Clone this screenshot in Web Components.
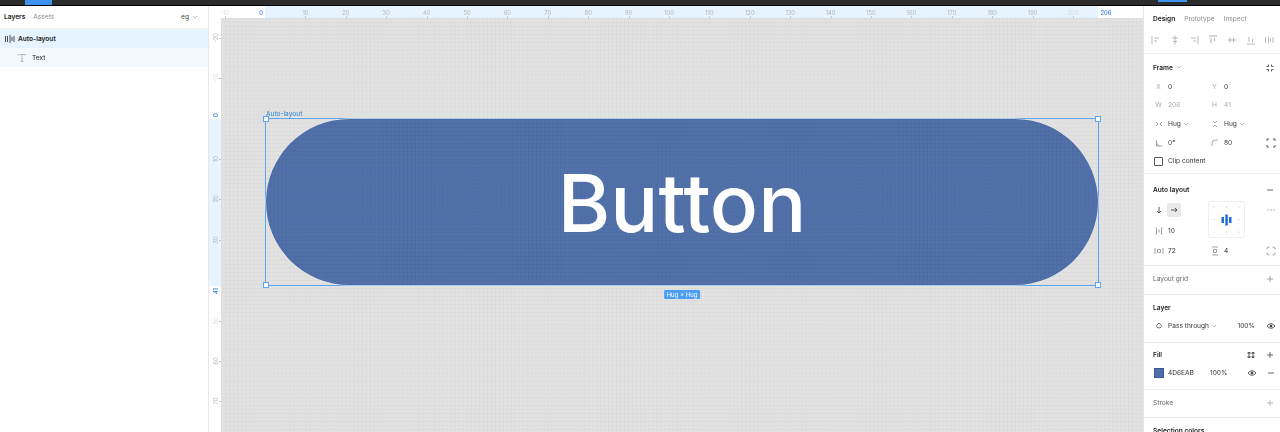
<!DOCTYPE html>
<html lang="en">
<head>
<meta charset="utf-8">
<title>Auto-layout</title>
<style>
  html, body { margin: 0; height: 100%; overflow: hidden; background: #fff; }
  body { font-family: Inter, "Liberation Sans", sans-serif; }
</style>
</head>
<body>
<fig-app></fig-app>

<script>
"use strict";

const SCALE = 4.04;
const stroke = (d, color = "#8c8c8c") =>
  `<svg width="12" height="12" viewBox="0 0 12 12" fill="none" stroke="${color}" stroke-width=".8"><path d="${d}"/></svg>`;

class FigTopbar extends HTMLElement {
  connectedCallback() {
    this.attachShadow({ mode: "open" }).innerHTML = `
      <style>
        :host { display: flex; height: 5px; background: #2c2c2c; border-bottom: 1px solid #000; padding-left: 25px; }
        div { width: 27px; background: #3d94ef; }
        .right { margin-left: 1106px; width: 29px; height: 2px; }
      </style>
      <div></div><div class="right"></div>`;
  }
}

class FigLayerRow extends HTMLElement {
  connectedCallback() {
    const selected = this.hasAttribute("selected");
    this.attachShadow({ mode: "open" }).innerHTML = `
      <style>
        :host { display: flex; align-items: center; height: 19px; padding-left: var(--indent, 4px); gap: var(--gap, 2px);
                background: ${selected ? "#e5f4ff" : "#f2f9ff"}; font-size: 6.6px; color: #222;
                font-weight: ${selected ? 600 : 400}; }
        span { display: flex; }
      </style>
      <span><slot name="icon"></slot></span><slot></slot>`;
  }
}

class FigLayers extends HTMLElement {
  connectedCallback() {
    this.attachShadow({ mode: "open" }).innerHTML = `
      <style>
        :host { display: block; background: #fff; border-right: 1px solid #e8e8e8; }
        header { display: flex; align-items: center; height: 22px; padding: 0 10px 0 4px; gap: 8px; font-size: 6.6px;
                 border-bottom: 1px solid #f0f0f0; color: #8a8a8a; }
        b { color: #222; font-weight: 600; }
        .page { margin-left: auto; color: #444; display: flex; align-items: center; gap: 3px; }
      </style>
      <header><b>Layers</b><span>Assets</span>
        <span class="page">eg <svg width="6" height="6" viewBox="0 0 6 6" fill="none" stroke="#aaa" stroke-width=".8"><path d="M1 2l2 2 2-2"/></svg></span>
      </header>
      <slot></slot>`;
  }
}

class FigRuler extends HTMLElement {
  connectedCallback() {
    const vertical = this.hasAttribute("vertical");
    const origin = vertical ? 100.5 : 56;
    const size = vertical ? 167 : 833;
    const values = vertical ? [-20, -10, 10, 20, 30, 50, 60, 70] : [];
    if (!vertical) for (let v = -10; v <= 200; v += 10) if (v !== 0) values.push(v);
    const axis = vertical ? "top" : "left";
    const ticks = values.map((v) => {
      const faded = v === 200 || v === -10 || (vertical && v === 50) ? " faded" : "";
      return `<i class="tick${faded}" style="${axis}:${origin + v * SCALE}px"><em>${v}</em></i>`;
    }).join("");
    const ends = vertical
      ? `<i class="tick end" style="top:${origin - 4}px"><em>0</em></i><i class="tick end" style="top:${origin + size + 5}px"><em>41</em></i>`
      : `<i class="tick end" style="left:${origin - 4}px"><em>0</em></i><i class="tick end" style="left:${origin + size + 8}px"><em>206</em></i>`;
    this.attachShadow({ mode: "open" }).innerHTML = `
      <style>
        :host { display: block; position: relative; overflow: hidden; background: #fff; font-size: 5.8px; color: #b4b4b4; }
        .range { position: absolute; background: #e5f4ff; ${vertical ? `left:0;right:0;top:${origin}px;height:${size}px` : `top:0;bottom:0;left:${origin}px;width:${size}px`}; }
        .tick { position: absolute; font-style: normal; ${vertical ? "left:0;width:12px;height:0" : "top:0;height:12px;width:0"}; }
        .tick em { position: absolute; font-style: normal; white-space: nowrap;
                   ${vertical ? "left:5.5px;top:0;transform:translate(-50%,-50%) rotate(-90deg)" : "left:0;top:6px;transform:translate(-50%,-50%)"}; }
        .faded { color: #dcdcdc; }
        .end { color: #2b7fd6; font-weight: 500; }
        .tick:not(.end)::after { content: ""; position: absolute; background: #c4c4c4;
                   ${vertical ? "right:0;top:0;width:2px;height:1px" : "bottom:0;left:0;width:1px;height:2px"}; }
      </style>
      <div class="range"></div>${ticks}${ends}`;
  }
}

class FigButton extends HTMLElement {
  connectedCallback() {
    this.attachShadow({ mode: "open" }).innerHTML = `
      <style>
        :host { display: flex; align-items: center; justify-content: center; box-sizing: border-box; height: 100%;
                border-radius: 84px; color: #fff; font-size: 80px; font-weight: 500;
                background-color: #5371a9;
                background-image: linear-gradient(#4d6ca6 1px, transparent 1px), linear-gradient(90deg, #4d6ca6 1px, transparent 1px);
                background-size: ${SCALE}px ${SCALE}px; box-shadow: 0 0 0 .5px #f1f1f1; }
      </style>
      <slot></slot>`;
  }
}

class FigSelection extends HTMLElement {
  connectedCallback() {
    this.attachShadow({ mode: "open" }).innerHTML = `
      <style>
        :host { position: absolute; left: 44px; top: 100px; width: 832px; height: 166px; display: block;
                border: 1px solid #5ba6ef; }
        .label { position: absolute; left: 0; top: -9px; font-size: 6.6px; line-height: 8px; color: #2b7fd6; }
        .handle { position: absolute; width: 4px; height: 4px; background: #fff; border: 1px solid #5ba6ef; }
        .tl { left: -3px; top: -3px; } .tr { right: -3px; top: -3px; }
        .bl { left: -3px; bottom: -3px; } .br { right: -3px; bottom: -3px; }
        .size { position: absolute; left: 50%; bottom: -14px; transform: translateX(-50%); background: #4a9ff5;
                color: #fff; font-size: 6px; line-height: 9px; padding: 0 2.500px; border-radius: 1px; white-space: nowrap; }
      </style>
      <div class="label">Auto-layout</div>
      <slot></slot>
      <span class="handle tl"></span><span class="handle tr"></span><span class="handle bl"></span><span class="handle br"></span>
      <div class="size">Hug × Hug</div>`;
  }
}

class FigCanvas extends HTMLElement {
  connectedCallback() {
    this.attachShadow({ mode: "open" }).innerHTML = `
      <style>
        :host { display: block; position: relative; overflow: hidden; background-color: #e2e2e2;
                background-image: linear-gradient(#dcdcdc 1px, transparent 1px), linear-gradient(90deg, #dcdcdc 1px, transparent 1px);
                background-size: ${SCALE}px ${SCALE}px; }
      </style>
      <slot></slot>`;
  }
}

class FigSection extends HTMLElement {
  connectedCallback() {
    const title = this.getAttribute("heading") || "";
    const muted = this.hasAttribute("muted");
    this.attachShadow({ mode: "open" }).innerHTML = `
      <style>
        :host { display: block; padding: var(--pt, 4px) 0 var(--pb, 4px); border-bottom: 1px solid #ececec; }
        header { display: flex; align-items: center; height: 18.7px; padding: 0 4px 0 9px; font-size: 6.6px;
                 font-weight: ${muted ? 400 : 600}; color: ${muted ? "#666" : "#222"}; }
        .extra { margin-left: auto; display: flex; gap: 7px; align-items: center; }
        .chev { margin-left: 3px; display: flex; }
      </style>
      <header>${title}<span class="chev"><slot name="chevron"></slot></span><span class="extra"><slot name="actions"></slot></span></header>
      <slot></slot>`;
  }
}

class FigProp extends HTMLElement {
  connectedCallback() {
    this.attachShadow({ mode: "open" }).innerHTML = `
      <style>
        :host { display: flex; align-items: center; font-size: 6.6px; color: #333; white-space: nowrap; min-width: 0; }
        .icon { width: 16px; flex: none; display: flex; justify-content: center; padding-right: 3px; box-sizing: border-box; }
      </style>
      <span class="icon"><slot name="icon"></slot></span><slot></slot>`;
  }
}

class FigRow extends HTMLElement {
  connectedCallback() {
    this.attachShadow({ mode: "open" }).innerHTML = `
      <style>
        :host { display: grid; grid-template-columns: 56px 54px 18px; align-items: center; height: 18.7px; padding-left: 8px; }
      </style>
      <slot></slot>`;
  }
}

class FigAlignBox extends HTMLElement {
  connectedCallback() {
    const dots = [[6, 6], [18.5, 6], [31, 6], [6, 18.5], [31, 18.5], [6, 31], [18.5, 31], [31, 31]]
      .map(([x, y]) => `<circle cx="${x}" cy="${y}" r=".5" fill="#b5b5b5"/>`).join("");
    this.attachShadow({ mode: "open" }).innerHTML = `
      <style>:host { display: block; width: 37px; height: 37px; border: 1px solid #efefef; border-radius: 2px; box-sizing: border-box; line-height: 0; }</style>
      <svg width="35" height="35" viewBox="1 1 35 35">${dots}
        <g fill="#1f6fd0"><rect x="13.5" y="16" width="2.5" height="6"/><rect x="17.3" y="13.5" width="2.5" height="11"/><rect x="21" y="16" width="2.5" height="6"/></g></svg>`;
  }
}

class FigInspector extends HTMLElement {
  connectedCallback() {
    this.attachShadow({ mode: "open" }).innerHTML = `
      <style>
        :host { display: block; overflow: hidden; background: #fff; border-left: 1px solid #e4e4e4; }
        .tabs { display: flex; align-items: center; height: 25px; padding-left: 9px; gap: 9px; font-size: 6.6px; color: #8a8a8a; }
        .tabs b { color: #222; font-weight: 600; }
        .aligns { display: flex; align-items: center; height: 17px; padding: 0 0 5px 6px; gap: 7px; border-bottom: 1px solid #ececec; }
        .aligns svg { display: block; }
      </style>
      <div class="tabs"><b>Design</b><span>Prototype</span><span>Inspect</span></div>
      <div class="aligns">
        ${stroke("M2 2v8M4 4h5M4 7h3", "#aaa")}
        ${stroke("M6 1.500v9M3 4h6M4 7.500h4", "#aaa")}
        ${stroke("M10 2v8M3 4h5M5 7h3", "#aaa")}
        ${stroke("M2 2h8M4 4v5M7.500 4v3", "#999")}
        ${stroke("M1.500 6h9M4 3v6M7.500 4v4", "#aaa")}
        ${stroke("M2 10h8M4 3v5M7.500 5v3", "#aaa")}
        ${stroke("M1.500 3v6M4.500 3v6M6.500 4.500v3M9 3v6", "#aaa")}
      </div>
      <slot></slot>`;
  }
}

class FigApp extends HTMLElement {
  connectedCallback() {
    this.attachShadow({ mode: "open" }).innerHTML = `
      <style>
        :host { display: grid; grid-template-columns: 209px 12px minmax(0, 1fr) 137px; grid-template-rows: 6px 12px minmax(0, 1fr); height: 432px; overflow: hidden; color: #222; filter: blur(.3px); }
        fig-topbar { grid-column: 1 / -1; }
        fig-layers { grid-column: 1; grid-row: 2 / 4; }
        .hr { grid-column: 2 / 4; grid-row: 2; }
        .vr { grid-column: 2; grid-row: 3; }
        fig-canvas { grid-column: 3; grid-row: 3; }
        fig-inspector { grid-column: 4; grid-row: 2 / 4; }
        .rows { display: grid; grid-template-columns: 56px 54px 18px; grid-template-rows: 22px 19px 22px; align-items: center; padding-left: 8px; }
        .dir { display: flex; align-items: center; gap: 1px; }
        .dir span { width: 14px; height: 14px; display: flex; align-items: center; justify-content: center; border-radius: 2px; }
        .dir .on { background: #e9e9e9; }
        .mid { grid-column: 2; grid-row: 1 / 3; }
        .end { display: flex; justify-content: center; }
        .muted { color: #aaa; }
        .swatch { width: 10px; height: 10px; background: #4d6eab; border: .5px solid #3b5990; box-sizing: border-box; display: block; }
        .check { width: 7px; height: 7px; border: 1px solid #555; border-radius: 1px; display: block; }
        .auto { margin-left: auto; }
        svg { display: block; }
      </style>
      <fig-topbar></fig-topbar>
      <fig-layers>
        <fig-layer-row selected><span slot="icon">${stroke("M1.500 3v6M3.500 3v6M6 2v8M8 4v4M10 3v6", "#222")}</span>Auto-layout</fig-layer-row>
        <fig-layer-row style="--indent:16px;--gap:4px"><span slot="icon">${stroke("M2.500 3.500V2.500h7v1M6 2.500v7M4.500 9.500h3", "#aaa")}</span>Text</fig-layer-row>
      </fig-layers>
      <fig-ruler class="hr"></fig-ruler>
      <fig-ruler class="vr" vertical></fig-ruler>
      <fig-canvas>
        <fig-selection><fig-button>Button</fig-button></fig-selection>
      </fig-canvas>
      <fig-inspector>
        <fig-section heading="Frame" style="--pt:4.600px;--pb:2.400px">
          <span slot="chevron">${chev()}</span>
          <span slot="actions">${stroke("M2.500 4.500h2v-2M7.500 2.500v2h2M2.500 7.500h2v2M7.500 9.500v-2h2", "#333")}</span>
          <fig-row><fig-prop><span slot="icon" class="muted">X</span>0</fig-prop><fig-prop><span slot="icon" class="muted">Y</span>0</fig-prop></fig-row>
          <fig-row><fig-prop style="color:#aaa"><span slot="icon" class="muted">W</span>206</fig-prop><fig-prop style="color:#aaa"><span slot="icon" class="muted">H</span>41</fig-prop></fig-row>
          <fig-row><fig-prop><span slot="icon">${stroke("M3 4l2 2-2 2M9 4L7 6l2 2")}</span>Hug&nbsp;${chev()}</fig-prop><fig-prop><span slot="icon">${stroke("M4 3l2 2 2-2M4 9l2-2 2 2")}</span>Hug&nbsp;${chev()}</fig-prop></fig-row>
          <fig-row><fig-prop><span slot="icon">${stroke("M3.500 3v6h6M3.500 6l2.500 3")}</span>0°</fig-prop><fig-prop><span slot="icon">${stroke("M3 9V6.500A3.500 3.500 0 0 1 6.500 3H9")}</span>80</fig-prop><span class="end">${stroke("M2 4V2h2M8 2h2v2M10 8v2H8M4 10H2V8", "#333")}</span></fig-row>
          <fig-row><fig-prop><span slot="icon" class="check"></span>Clip content</fig-prop></fig-row>
        </fig-section>
        <fig-section heading="Auto layout" style="--pt:6.500px;--pb:2.300px">
          <span slot="actions">${stroke("M3 6h6", "#444")}</span>
          <div class="rows">
            <div class="dir"><span>${stroke("M6 3v6M4 7l2 2 2-2", "#333")}</span><span class="on">${stroke("M3 6h6M7 4l2 2-2 2", "#333")}</span></div>
            <div class="mid"><fig-align-box></fig-align-box></div>
            <span class="end">${stroke("M2.500 6h.8M5.600 6h.8M8.700 6h.8", "#222")}</span>
            <fig-prop><span slot="icon">${stroke("M2.500 3h1v6h-1M9.500 3h-1v6h1M6 4.500v3")}</span>10</fig-prop>
            <span></span>
            <fig-prop><span slot="icon">${stroke("M2 3v6M10 3v6M4.500 4.500h3v3h-3z")}</span>72</fig-prop>
            <fig-prop><span slot="icon">${stroke("M3 2h6M3 10h6M4.500 4.500h3v3h-3z")}</span>4</fig-prop>
            <span class="end">${stroke("M2 4.500V3l1-1h1.500M7.500 2H9l1 1v1.500M10 7.500V9l-1 1H7.500M4.500 10H3L2 9V7.500")}</span>
          </div>
        </fig-section>
        <fig-section heading="Layout grid" muted style="--pt:3.650px;--pb:5.650px">
          <span slot="actions">${stroke("M6 3v6M3 6h6")}</span>
        </fig-section>
        <fig-section heading="Layer" style="--pt:3.650px;--pb:6px">
          <fig-row><fig-prop style="grid-column:1 / 3;padding-right:7px"><span slot="icon">${stroke("M6 3l2.500 2.500a2.500 2.500 0 0 1-5 0z", "#555")}</span>Pass through&nbsp;${chev()}<span class="auto">100%</span></fig-prop><span class="end">${eye()}</span></fig-row>
        </fig-section>
        <fig-section heading="Fill" style="--pt:2.650px;--pb:6px">
          <span slot="actions">${stroke("M3 3.500h2v1.500H3zM7 3.500h2v1.500H7zM3 7h2v1.500H3zM7 7h2v1.500H7z", "#333")}</span>
          <span slot="actions">${stroke("M6 3v6M3 6h6", "#444")}</span>
          <fig-row><fig-prop><span slot="icon" class="swatch"></span>4D6EAB</fig-prop><fig-prop style="margin-left:-14px;padding-right:5px">100%<span class="auto">${eye()}</span></fig-prop><span class="end">${stroke("M3 6h6", "#444")}</span></fig-row>
        </fig-section>
        <fig-section heading="Stroke" muted style="--pt:3.650px;--pb:4.650px">
          <span slot="actions">${stroke("M6 3v6M3 6h6", "#aaa")}</span>
        </fig-section>
        <fig-section heading="Selection colors" style="--pt:3.650px"></fig-section>
      </fig-inspector>`;
  }
}

function chev() {
  return `<svg width="6" height="6" viewBox="0 0 6 6" fill="none" stroke="#aaa" stroke-width=".8" style="display:inline-block"><path d="M1 2l2 2 2-2"/></svg>`;
}
function eye() {
  return `<svg width="10" height="10" viewBox="0 0 10 10" fill="none" stroke="#333" stroke-width=".8"><path d="M1 5c2.500-3 5.500-3 8 0-2.500 3-5.500 3-8 0z"/><circle cx="5" cy="5" r="1" fill="#333"/></svg>`;
}

customElements.define("fig-topbar", FigTopbar);
customElements.define("fig-layer-row", FigLayerRow);
customElements.define("fig-layers", FigLayers);
customElements.define("fig-ruler", FigRuler);
customElements.define("fig-button", FigButton);
customElements.define("fig-selection", FigSelection);
customElements.define("fig-canvas", FigCanvas);
customElements.define("fig-section", FigSection);
customElements.define("fig-prop", FigProp);
customElements.define("fig-row", FigRow);
customElements.define("fig-align-box", FigAlignBox);
customElements.define("fig-inspector", FigInspector);
customElements.define("fig-app", FigApp);
</script>
</body>
</html>
